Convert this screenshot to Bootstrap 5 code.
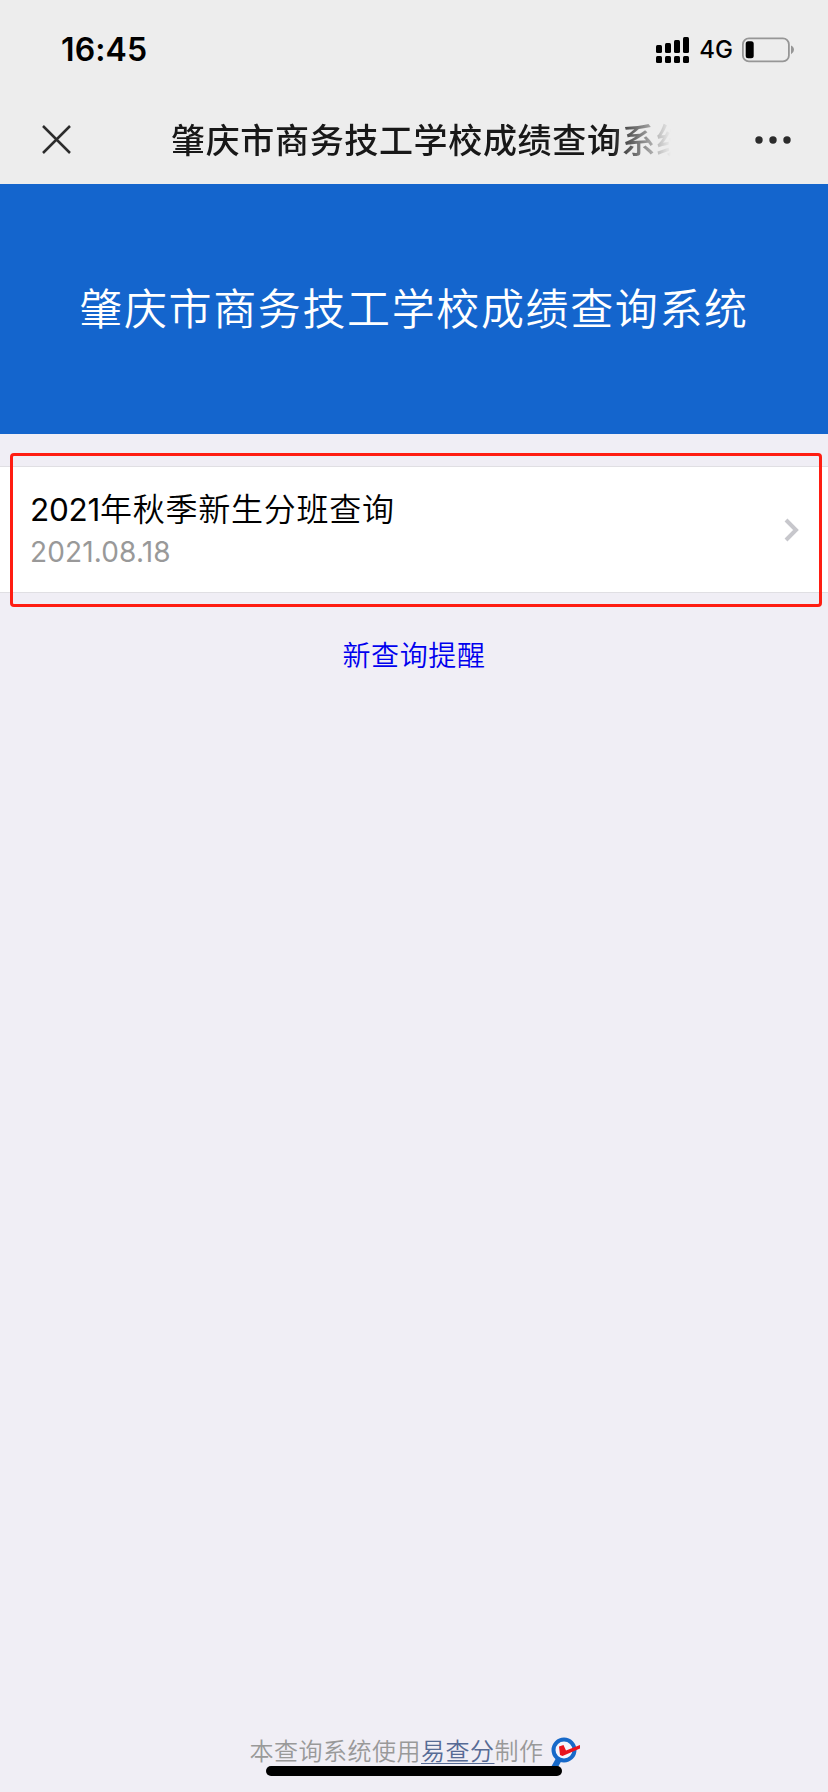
<!DOCTYPE html>
<html lang="zh-CN">
<head>
<meta charset="utf-8">
<meta name="viewport" content="width=device-width, initial-scale=1">
<title>肇庆市商务技工学校成绩查询系统</title>
<link href="https://cdn.jsdelivr.net/npm/bootstrap@5.3.0/dist/css/bootstrap.min.css" rel="stylesheet">
<style>
body{background:#f0eef5;font-family:Inter,"Noto Sans CJK SC",sans-serif;color:#000}
svg{display:block;flex:none}
.top-area{background:#ededed;height:184px}
.status-row{height:100px;padding:0 33px 0 61px}
.clock{font-size:32px;font-weight:600;line-height:40px;letter-spacing:.1px}
.net{font-size:24px;font-weight:500;line-height:30px;letter-spacing:0}
.title-row{height:84px;padding:0 36px 4px 41px}
.page-title{width:524px;margin-left:98px;padding-top:2px;font-size:34px;font-weight:500;letter-spacing:.66px;line-height:50px;color:#181818;-webkit-mask-image:linear-gradient(90deg,#000 440px,transparent 500px);mask-image:linear-gradient(90deg,#000 440px,transparent 500px)}
.hero{height:250px;background:#1465cd;color:#fff;font-size:43px;font-weight:350;letter-spacing:1.62px;line-height:60px}
.entry-wrap{padding-top:32px}
.entry{height:127px;border:solid #e0dfe3;border-width:1px 0;padding:0 28px 0 30px;background:#fff}
.entry-title{font-size:32px;font-weight:350;letter-spacing:.75px;line-height:44px;margin-top:-1px}
.digits{font-size:31.5px;font-weight:400;letter-spacing:-.3px}
.entry-date{font-size:28px;line-height:36px;color:#999;margin-top:2px;letter-spacing:.15px}
.outline{left:10px;right:6px;top:19px;height:154px;border:3px solid #ff1d12;border-radius:4px}
.remind{font-size:28px;font-weight:350;letter-spacing:.6px;line-height:40px;color:#00e;margin-top:43px}
.foot{font-size:24px;font-weight:350;letter-spacing:.5px;line-height:36px;color:#999;padding-bottom:22px}
.foot a{color:#576b95;text-decoration:underline;text-decoration-thickness:1px;text-underline-offset:3px}
.foot svg{margin:2px 2px 0 7px}
.home-bar{left:266px;width:296px;height:10px;bottom:16px;border-radius:5px;background:#000}
</style>
</head>
<body>
<div class="d-flex flex-column vh-100 position-relative overflow-hidden">
  <header class="top-area flex-shrink-0">
    <div class="status-row d-flex align-items-center justify-content-between">
      <span class="clock">16:45</span>
      <div class="d-flex align-items-center">
        <svg width="35" height="28" viewBox="0 0 35 28"><rect x="0" y="9" width="6" height="8" rx="1.5"/><rect x="9" y="7" width="6" height="10" rx="1.5"/><rect x="18" y="4" width="6" height="13" rx="1.5"/><rect x="27" y="1" width="6" height="16" rx="1.5"/><rect x="0" y="20" width="6" height="7" rx="1.5"/><rect x="9" y="20" width="6" height="7" rx="1.5"/><rect x="18" y="20" width="6" height="7" rx="1.5"/><rect x="27" y="20" width="6" height="7" rx="1.5"/></svg>
        <span class="net ms-2 me-2">4G</span>
        <svg width="54" height="26" viewBox="0 0 54 26"><rect x="1.9" y="1.4" width="46" height="23" rx="6" fill="none" stroke="#969696" stroke-width="1.8"/><rect x="4.7" y="4.3" width="8" height="17" rx="2.5"/><path d="M50 8.5q3 1.4 3 4.3t-3 4.4z" fill="#969696"/></svg>
      </div>
    </div>
    <div class="title-row d-flex align-items-center">
      <svg width="32" height="32" viewBox="0 0 32 32" fill="none" stroke="#2c2c2c" stroke-width="2.5"><path d="M2 2 29 29M29 2 2 29"/></svg>
      <h1 class="page-title mb-0 text-nowrap">肇庆市商务技工学校成绩查询系统</h1>
      <svg class="ms-auto" width="38" height="10" viewBox="0 0 38 10" fill="#2c2c2c"><circle cx="5" cy="5" r="3.7"/><circle cx="19" cy="5" r="3.7"/><circle cx="33" cy="5" r="3.7"/></svg>
    </div>
  </header>
  <section class="hero d-flex align-items-center justify-content-center text-nowrap flex-shrink-0">肇庆市商务技工学校成绩查询系统</section>
  <main class="flex-grow-1">
    <div class="entry-wrap position-relative">
      <div class="entry d-flex align-items-center justify-content-between">
        <div>
          <div class="entry-title"><span class="digits">2021</span>年秋季新生分班查询</div>
          <div class="entry-date">2021.08.18</div>
        </div>
        <svg width="16" height="24" viewBox="0 0 16 24" fill="none" stroke="#c7c7cc" stroke-width="4"><path d="M2 2 12 12 2 22"/></svg>
      </div>
      <div class="outline position-absolute"></div>
    </div>
    <div class="remind text-center">新查询提醒</div>
  </main>
  <footer class="foot d-flex align-items-center justify-content-center">
    <span class="ms-1">本查询系统使用<a href="#">易查分</a>制作</span>
    <svg width="30" height="32" viewBox="0 0 30 32"><path d="M8 22 3 31" stroke="#1769c9" stroke-width="6"/><circle cx="13" cy="13" r="10.5" fill="#f6f4fb" stroke="#1769c9" stroke-width="4"/><path d="M8 9.5 12.5 8 15 13.5 29 8V11.5L11.500 19 9 18Z" fill="#e9131d"/></svg>
  </footer>
  <div class="home-bar position-absolute"></div>
</div>
<script src="https://cdn.jsdelivr.net/npm/bootstrap@5.3.0/dist/js/bootstrap.bundle.min.js"></script>
</body>
</html>
